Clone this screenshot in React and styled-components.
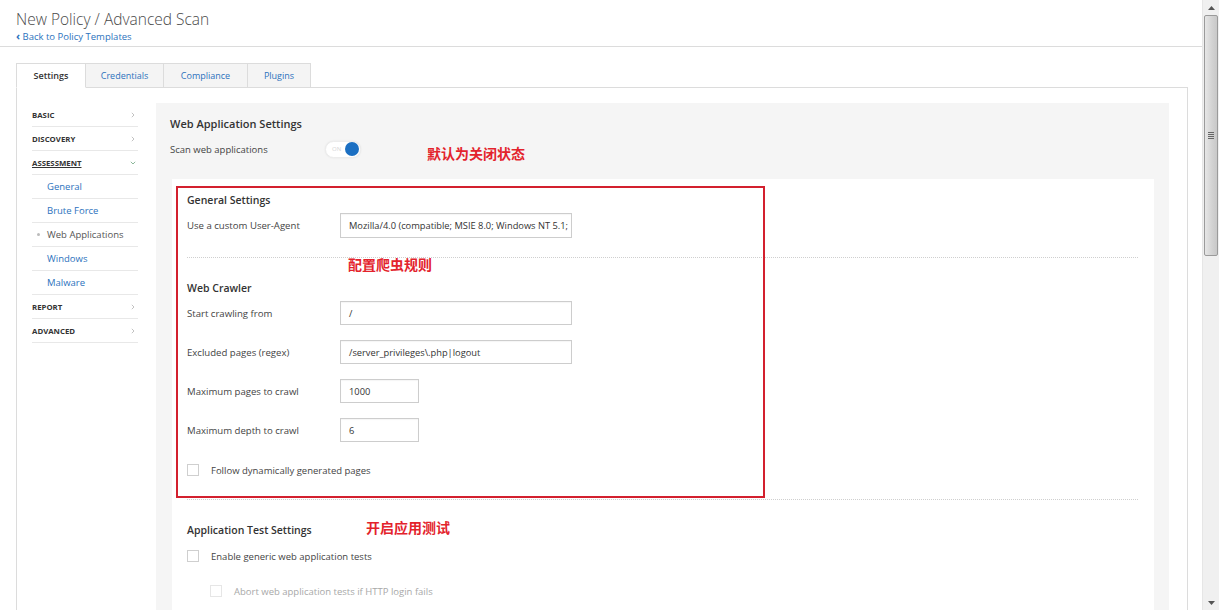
import React from 'react'
import styled, { createGlobalStyle } from 'styled-components'

const GlobalStyle = createGlobalStyle`
	html, body {
		margin: 0;
		padding: 0;
		background: #fff;
		overflow: hidden;
	}
	body {
		font-family: "Open Sans", "Noto Sans", "Noto Sans CJK SC", sans-serif;
		color: #444;
	}
`

const menu = [
	{ label: 'BASIC' },
	{ label: 'DISCOVERY' },
	{ label: 'ASSESSMENT', open: true },
	{ label: 'General', sub: true },
	{ label: 'Brute Force', sub: true },
	{ label: 'Web Applications', sub: true, current: true },
	{ label: 'Windows', sub: true },
	{ label: 'Malware', sub: true },
	{ label: 'REPORT' },
	{ label: 'ADVANCED' },
]

const tabs = [
	{ label: 'Settings', width: 70, active: true },
	{ label: 'Credentials', width: 78 },
	{ label: 'Compliance', width: 84 },
	{ label: 'Plugins', width: 63 },
]

const crawler = [
	{ label: 'Start crawling from', value: '/', wide: true },
	{ label: 'Excluded pages (regex)', value: '/server_privileges\\.php|logout', wide: true },
	{ label: 'Maximum pages to crawl', value: '1000' },
	{ label: 'Maximum depth to crawl', value: '6' },
]

const Chevron = ({ open }) => (
	<svg width="6" height="6" viewBox="0 0 6 6">
		{open
			? <path d="M0.8 1.8 L3 4 L5.2 1.8" fill="none" stroke="#7fb08f" strokeWidth="0.9" />
			: <path d="M1.8 0.8 L4 3 L1.8 5.2" fill="none" stroke="#bbb" strokeWidth="0.9" />}
	</svg>
)

export default function App() {
	return (
		<Page>
			<GlobalStyle />
			<Main>
				<Header>
					<Title>New Policy / Advanced Scan</Title>
					<BackLink><span>‹</span> Back to Policy Templates</BackLink>
				</Header>

				<Body>
					<Tabs>
						{tabs.map(t => (
							<Tab key={t.label} $active={t.active} $width={t.width}>{t.label}</Tab>
						))}
					</Tabs>

					<Box>
						<Sidebar>
							{menu.map(m => (
								<MenuItem key={m.label} $sub={m.sub} $current={m.current} $open={m.open}>
									{m.current && <Bullet />}
									<span>{m.label}</span>
									{!m.sub && <Chevron open={m.open} />}
								</MenuItem>
							))}
						</Sidebar>

						<Content>
							<PanelTitle>Web Application Settings</PanelTitle>
							<ScanRow>
								<ScanLabel>Scan web applications</ScanLabel>
								<Toggle><span>ON</span><Knob /></Toggle>
								<Note $inline>默认为关闭状态</Note>
							</ScanRow>

							<WhitePanel>
								<RedFrame />
								<Note style={{ left: 176, top: 77 }}>配置爬虫规则</Note>
								<Note style={{ left: 194, top: 340 }}>开启应用测试</Note>

								<Section $pad={19}>
									<Heading>General Settings</Heading>
									<Rows>
										<Row>
											<Label>Use a custom User-Agent</Label>
											<Input $wide $tall>Mozilla/4.0 (compatible; MSIE 8.0; Windows NT 5.1;</Input>
										</Row>
									</Rows>
								</Section>

								<Section $pad={17}>
									<Heading>Web Crawler</Heading>
									<Rows>
										{crawler.map(r => (
											<Row key={r.label}>
												<Label>{r.label}</Label>
												<Input $wide={r.wide}>{r.value}</Input>
											</Row>
										))}
									</Rows>
									<CheckRow $top={16}>
										<Check />
										<CheckLabel>Follow dynamically generated pages</CheckLabel>
									</CheckRow>
								</Section>

								<Section $last>
									<Heading>Application Test Settings</Heading>
									<CheckRow $top={6}>
										<Check />
										<CheckLabel>Enable generic web application tests</CheckLabel>
									</CheckRow>
									<CheckRow $top={11} $indent>
										<Check $muted />
										<CheckLabel $muted>Abort web application tests if HTTP login fails</CheckLabel>
									</CheckRow>
								</Section>
							</WhitePanel>
						</Content>
					</Box>
				</Body>
			</Main>

			<ScrollBar>
				<ScrollButton>
					<svg width="7" height="4" viewBox="0 0 7 4"><path d="M0 4 L3.5 0 L7 4 Z" fill="#555" /></svg>
				</ScrollButton>
				<Thumb>
					<Grip><i /><i /><i /><i /></Grip>
				</Thumb>
				<Track />
				<ScrollButton>
					<svg width="7" height="4" viewBox="0 0 7 4"><path d="M0 0 L3.5 4 L7 0 Z" fill="#555" /></svg>
				</ScrollButton>
			</ScrollBar>
		</Page>
	)
}


// * styled components
const Page = styled.div`
	display: flex;
	height: 610px;
	overflow: hidden;
`
const Main = styled.div`
	flex: 1;
	min-width: 0;
	display: flex;
	flex-direction: column;
`
const Header = styled.header`
	padding: 9px 16px 2px;
	border-bottom: 1px solid #dcdcdc;
`
const Title = styled.h1`
	margin: 0;
	font-size: 15.5px;
	font-weight: 300;
	line-height: 20px;
	color: #4a4a4a;
`
const BackLink = styled.a`
	display: block;
	font-size: 9.5px;
	line-height: 14px;
	color: #2c72bd;
	span{
		font-size: 11px;
		font-weight: 700;
	}
`
const Body = styled.div`
	padding: 16px 14px 0 16px;
	flex: 1;
`
const Tabs = styled.div`
	display: flex;
	position: relative;
	z-index: 1;
	margin-bottom: -1px;
`
const Tab = styled.div`
	width: ${p => p.$width}px;
	height: 25px;
	box-sizing: border-box;
	display: flex;
	align-items: center;
	justify-content: center;
	padding-bottom: 1px;
	font-size: 9px;
	font-weight: ${p => (p.$active ? 600 : 400)};
	color: ${p => (p.$active ? '#333' : '#2c72bd')};
	background: ${p => (p.$active ? '#fff' : '#f4f4f4')};
	border: 1px solid #dcdcdc;
	border-left: none;
	border-bottom-color: ${p => (p.$active ? '#fff' : '#dcdcdc')};
	&:first-child{
		border-left: 1px solid #dcdcdc;
	}
`
const Box = styled.div`
	display: flex;
	align-items: flex-start;
	border: 1px solid #dcdcdc;
	padding: 15px 18px 0 15px;
	height: 600px;
`
const Sidebar = styled.nav`
	width: 106px;
	flex-shrink: 0;
	margin-right: 18px;
`
const MenuItem = styled.div`
	height: 23px;
	border-bottom: 1px solid #e8e8e8;
	display: flex;
	align-items: center;
	justify-content: ${p => (p.$sub ? 'flex-start' : 'space-between')};
	position: relative;
	padding-left: ${p => (p.$sub ? '15px' : '0')};
	padding-right: 2px;
	span{
		font-size: ${p => (p.$sub ? '9.5px' : '7.8px')};
		font-weight: ${p => (p.$sub ? 400 : 700)};
		color: ${p => (p.$sub ? (p.$current ? '#555' : '#2c72bd') : '#333')};
		text-decoration: ${p => (p.$open ? 'underline' : 'none')};
	}
`
const Bullet = styled.i`
	position: absolute;
	left: 5px;
	top: 10px;
	width: 3px;
	height: 3px;
	border-radius: 50%;
	background: #bbb;
`
const Content = styled.section`
	flex: 1;
	background: #f5f5f5;
	padding: 13px 15px 0 14px;
	align-self: stretch;
`
const PanelTitle = styled.h2`
	margin: 0;
	font-size: 11px;
	font-weight: 600;
	line-height: 16px;
	color: #333;
`
const ScanRow = styled.div`
	display: flex;
	align-items: center;
	height: 18px;
	margin-top: 8px;
`
const ScanLabel = styled.span`
	width: 155px;
	font-size: 9.5px;
	color: #444;
`
const Toggle = styled.div`
	width: 36px;
	height: 17px;
	box-sizing: border-box;
	border-radius: 9px;
	background: #fff;
	border: 1px solid #ececec;
	box-shadow: 0 0 2px rgba(0,0,0,0.08);
	display: flex;
	align-items: center;
	justify-content: space-between;
	padding: 0 1px 0 6px;
	span{
		font-size: 6px;
		color: #d5d5d5;
	}
`
const Knob = styled.i`
	width: 14px;
	height: 14px;
	border-radius: 50%;
	background: #1b6fc2;
`
const Note = styled.span`
	position: ${p => (p.$inline ? 'static' : 'absolute')};
	margin-left: ${p => (p.$inline ? '66px' : '0')};
	margin-top: ${p => (p.$inline ? '7px' : '0')};
	font-family: "Noto Sans CJK SC", sans-serif;
	font-size: 14px;
	font-weight: 700;
	line-height: 16px;
	color: #e3232c;
	white-space: nowrap;
`
const WhitePanel = styled.div`
	position: relative;
	background: #fff;
	margin: 21px 0 0 2px;
	padding: 13px 16px 0 15px;
	height: 560px;
`
const RedFrame = styled.div`
	position: absolute;
	left: 4px;
	top: 7px;
	width: 589px;
	height: 312px;
	box-sizing: border-box;
	border: 2px solid #d3202e;
	pointer-events: none;
`
const Section = styled.div`
	padding-bottom: ${p => (p.$last ? 0 : p.$pad)}px;
	margin-bottom: 22px;
	border-bottom: ${p => (p.$last ? 'none' : '1px dotted #cfcfcf')};
`
const Heading = styled.h3`
	margin: 0;
	font-size: 10.5px;
	font-weight: 600;
	line-height: 16px;
	color: #333;
`
const Rows = styled.div`
	display: flex;
	flex-direction: column;
	gap: 15px;
	margin-top: 5px;
`
const Row = styled.div`
	display: flex;
	align-items: center;
`
const Label = styled.span`
	width: 153px;
	flex-shrink: 0;
	font-size: 9.6px;
	color: #444;
`
const Input = styled.div`
	width: ${p => (p.$wide ? '232px' : '79px')};
	height: ${p => (p.$tall ? '25px' : '24px')};
	box-sizing: border-box;
	border: 1px solid #cdcdcd;
	box-shadow: inset 0 1px 1px rgba(0,0,0,0.04);
	padding: 0 0 0 8px;
	display: flex;
	align-items: center;
	font-size: 9.3px;
	color: #333;
	white-space: nowrap;
	overflow: hidden;
`
const CheckRow = styled.div`
	display: flex;
	align-items: center;
	height: 24px;
	margin-top: ${p => p.$top}px;
	padding-left: ${p => (p.$indent ? '23px' : '0')};
`
const Check = styled.i`
	width: 12px;
	height: 12px;
	box-sizing: border-box;
	border: 1px solid ${p => (p.$muted ? '#e6e6e6' : '#cfcfcf')};
	background: #fff;
	margin-right: 12px;
`
const CheckLabel = styled.span`
	font-size: 9.5px;
	color: ${p => (p.$muted ? '#a8a8a8' : '#444')};
`
const ScrollBar = styled.div`
	width: 17px;
	flex-shrink: 0;
	display: flex;
	flex-direction: column;
	background: #f0f0f0;
	border-left: 1px solid #e6e6e6;
	box-sizing: border-box;
`
const ScrollButton = styled.div`
	height: 15px;
	display: flex;
	align-items: center;
	justify-content: center;
`
const Thumb = styled.div`
	height: 241px;
	margin: 0 1px;
	box-sizing: border-box;
	border: 1px solid #9a9a9a;
	border-radius: 2px;
	background: linear-gradient(to right, #e6e6e6, #d2d2d2 60%, #c8c8c8);
	display: flex;
	align-items: center;
	justify-content: center;
`
const Grip = styled.div`
	display: flex;
	flex-direction: column;
	gap: 1px;
	i{
		display: block;
		width: 6px;
		height: 1px;
		background: #666;
	}
`
const Track = styled.div`
	flex: 1;
`
